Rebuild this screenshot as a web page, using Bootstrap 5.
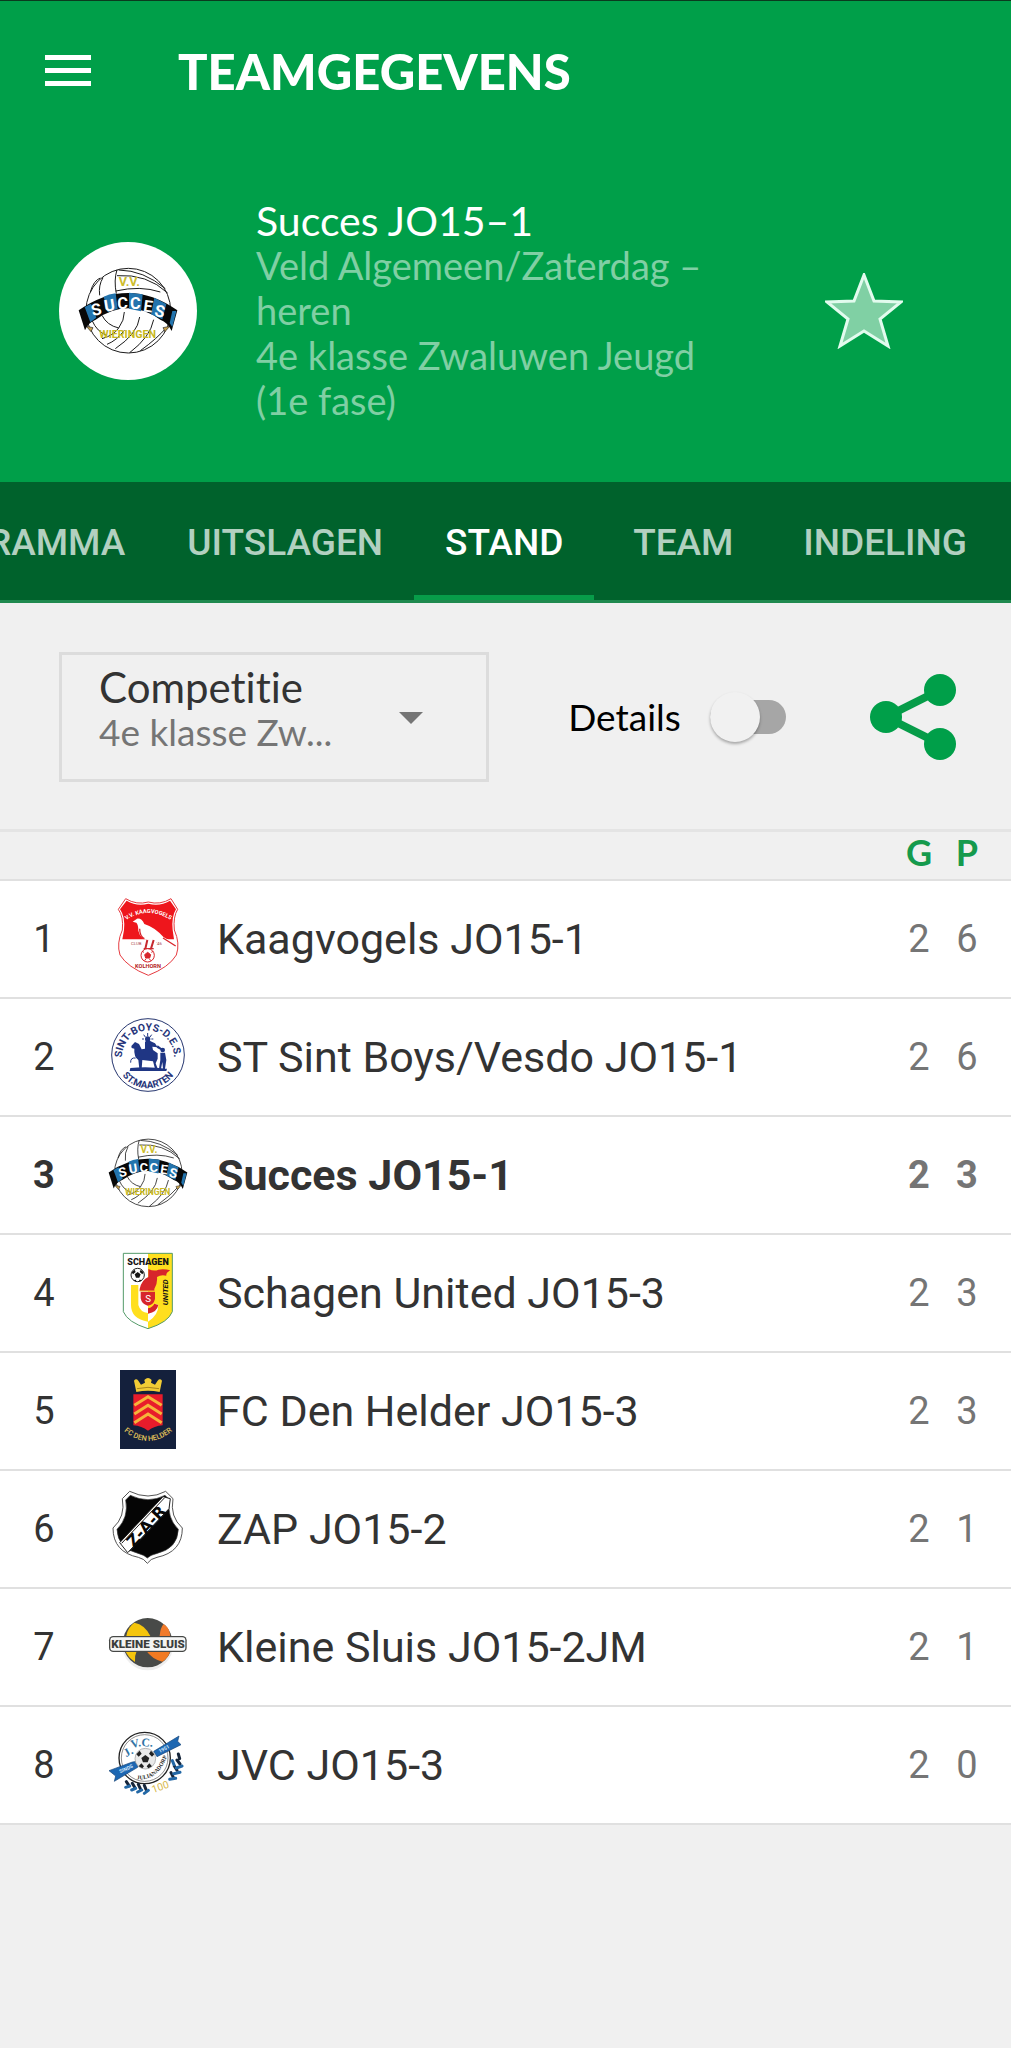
<!DOCTYPE html>
<html lang="nl">
<head>
<meta charset="utf-8">
<meta name="viewport" content="width=device-width, initial-scale=1">
<title>Teamgegevens</title>
<link href="https://cdn.jsdelivr.net/npm/bootstrap@5.3.0/dist/css/bootstrap.min.css" rel="stylesheet">
<style>
  :root { --club: #009f49; --club-dark: #00622c; --line: #e0e0e0; --ink: #333; --soft: #757575; }
  body { background: #f0f0f0; font-family: Roboto, "Liberation Sans", sans-serif; color: var(--ink); overflow-x: hidden; }
  .brandfont { font-family: Lato, "Open Sans", sans-serif; font-variant-ligatures: none; }
  .app-head { background: var(--club); border-top: 1px solid #0a3a1e; color: #fff; }
  .app-bar { height: 139px; padding-left: 45px; gap: 87px; }
  .app-bar svg { width: 46px; height: 32px; display: block; }
  .app-title { font-size: 49px; line-height: 60px; font-weight: 900; }
  .team-info { padding: 58px 108px 59px 59px; }
  .crest { width: 138px; height: 138px; background: #fff; }
  .team-text { font-size: 38px; line-height: 45px; width: 480px; margin-left: 59px; color: #80cfa4; }
  .team-name { font-size: 41px; line-height: 45px; font-weight: 400; color: #fff; }
  .fav svg { width: 78px; height: 76px; display: block; }
  .tabs { background: var(--club-dark); border-bottom: 3px solid #1f8a4f; overflow: hidden; justify-content: flex-end; padding-right: 13px; }
  .tabs .nav-link { flex: none; font-size: 37px; font-weight: 500; line-height: 105px; min-width: 178px; text-align: center; padding: 8px 31px 0; color: #b2d0c0; border-bottom: 5px solid transparent; border-radius: 0; }
  .tabs .nav-link.active { color: #fff; border-bottom-color: #079c49; }
  .filters { padding: 49px 54px 47px 59px; border-bottom: 3px solid #e4e4e4; }
  .picker { width: 430px; height: 130px; border: 3px solid #dcdcdc; padding: 10px 63px 0 37px; }
  .picker label { font-size: 42px; line-height: 45px; }
  .picker select { appearance: none; border: 0; background: transparent; padding: 0; width: 250px; font-size: 37px; line-height: 44px; height: 44px; color: var(--soft); }
  .picker svg { width: 24px; height: 12px; margin-top: 47px; }
  .details { font-size: 37px; line-height: 44px; color: #000; gap: 29px; margin-right: 4px; }
  .toggle { appearance: none; width: 76px; height: 34px; margin: 0; display: flex; align-items: center; background: #a6a6a6; border-radius: 17px; }
  .toggle::before { content: ""; flex: none; width: 50px; height: 50px; border-radius: 50%; background: #f1f1f1; box-shadow: 0 2px 3px rgba(0,0,0,.3); }
  .share svg { width: 88px; height: 88px; display: block; }
  .standings { table-layout: fixed; width: 100%; margin: 0; border-collapse: collapse; }
  .standings th, .standings td { padding: 0; vertical-align: middle; text-align: center; border-bottom: 2px solid var(--line); }
  .standings thead th { height: 48px; line-height: 41px; font-size: 36px; font-weight: 700; color: #159a4d; vertical-align: top; }
  .standings tbody tr { background: #fff; height: 118px; }
  .standings tbody td { font-size: 38px; line-height: 48px; }
  .standings .pts { color: var(--soft); }
  .standings tbody .club { font-size: 43px; text-align: left; padding-left: 9px; white-space: nowrap; }
  .c-rank { width: 88px; } .c-logo { width: 120px; } .c-num { width: 48px; } .c-end { width: 20px; }
  .own td, .own .pts { font-weight: 700; }
  .logo { width: 84px; height: 84px; display: block; margin: 0 auto; }
</style>
</head>
<body>
<svg width="0" height="0" class="position-absolute" aria-hidden="true">
  <defs>
    <g id="succes">
      <g fill="#fff" stroke="#1c1c1c" stroke-width="3">
        <circle cx="234" cy="241" r="127"/>
        <g fill="none">
          <path d="M200 118Q190 150 198 190M158 142Q144 165 148 195M205 119Q280 120 345 175M200 136Q290 130 352 188M120 185Q130 150 150 143M196 182Q270 165 330 185"/>
          <path d="M155 255Q170 285 205 293Q222 270 222 245M205 293Q190 315 155 325M268 260Q262 310 195 355M310 268Q300 320 238 367M350 290Q320 325 270 361M125 270Q140 305 170 315M222 300Q200 330 170 342"/>
        </g>
      </g>
      <path d="M108 288l14 16 6-12zM358 288l-14 16-6-12z" fill="#c9a24c" stroke="#222" stroke-width="2"/>
      <path d="M85 240Q233 136 381 240L364 302Q352 276 330 268Q233 200 136 268Q114 276 104 300Z" fill="#080808"/>
      <path d="M103 230L122 220 138 262 120 276ZM160 199Q175 192 196 189L202 236Q186 240 172 246ZM236 187L277 192 272 243 236 235ZM312 202L348 221 336 267 302 252ZM366 242L378 242 366 290 358 278Z" fill="#2374ad"/>
      <text font-family="Roboto" font-size="49" font-weight="700" fill="#fff" text-anchor="middle"><tspan x="142" y="258" rotate="-14">S</tspan><tspan x="180" y="244" rotate="-9">U</tspan><tspan x="217" y="237">C</tspan><tspan x="255" y="237">C</tspan><tspan x="291" y="243" rotate="8">E</tspan><tspan x="325" y="256" rotate="12">S</tspan></text>
      <text x="237" y="168" font-family="Roboto" font-size="38" font-weight="700" fill="#cdbd2c" text-anchor="middle">V.V.</text>
      <text x="232" y="323" font-family="Roboto" font-size="32" font-weight="700" fill="#c8b820" text-anchor="middle">WIERINGEN</text>
    </g>
  </defs>
</svg>

<header class="app-head brandfont">
  <div class="app-bar d-flex align-items-center">
    <button class="btn p-0 border-0" type="button" aria-label="Menu">
      <svg viewBox="0 0 46 32" fill="#fff"><path d="M0 0h46v5H0zM0 13h46v5H0zM0 26h46v5H0z"/></svg>
    </button>
    <h1 class="app-title m-0">TEAMGEGEVENS</h1>
  </div>
  <section class="team-info d-flex align-items-center">
    <div class="crest rounded-circle flex-shrink-0">
      <svg viewBox="26 35 414 414" width="138" height="138" role="img" aria-label="VV Succes"><use href="#succes"/></svg>
    </div>
    <div class="team-text">
      <h2 class="team-name m-0">Succes JO15–1</h2>
      <div>Veld Algemeen/Zaterdag –<br>heren</div>
      <div>4e klasse Zwaluwen Jeugd<br>(1e fase)</div>
    </div>
    <button class="fav btn p-0 border-0 ms-auto" type="button" aria-label="Favoriet">
      <svg viewBox="2 2 78 76"><path d="M41 4L51 30 78 31 57 48 65 75 41 60 17 75 25 48 4 31 31 30Z" fill="#80d0a4" stroke="#e2fbee" stroke-width="3"/></svg>
    </button>
  </section>
</header>

<nav class="tabs nav flex-nowrap" aria-label="Onderdelen">
  <a class="nav-link" href="#programma">PROGRAMMA</a>
  <a class="nav-link" href="#uitslagen">UITSLAGEN</a>
  <a class="nav-link active" href="#stand" aria-current="page">STAND</a>
  <a class="nav-link" href="#team">TEAM</a>
  <a class="nav-link" href="#indeling">INDELING</a>
</nav>

<main>
  <div class="filters brandfont d-flex align-items-center justify-content-between">
    <div class="picker d-flex align-items-start justify-content-between">
      <div class="d-flex flex-column">
        <label for="competition">Competitie</label>
        <select id="competition"><option>4e klasse Zw...</option></select>
      </div>
      <svg class="flex-shrink-0" viewBox="0 0 24 12"><path d="M0 0h24L12 12z" fill="#757575"/></svg>
    </div>
    <div class="details d-flex align-items-center">
      <label for="details">Details</label>
      <input class="toggle" type="checkbox" role="switch" id="details">
    </div>
    <button class="share btn p-0 border-0" type="button" aria-label="Delen">
      <svg viewBox="0 0 88 88" fill="#009f49"><path d="M17 44L71 17M17 44L71 71" stroke="#079c49" stroke-width="8"/><circle cx="17" cy="44" r="16"/><circle cx="71" cy="17" r="16"/><circle cx="71" cy="71" r="16"/></svg>
    </button>
  </div>

  <table class="standings">
    <colgroup><col class="c-rank"><col class="c-logo"><col><col class="c-num"><col class="c-num"><col class="c-end"></colgroup>
    <thead class="brandfont"><tr><th colspan="3"></th><th scope="col">G</th><th scope="col">P</th><th></th></tr></thead>
    <tbody>
      <tr>
        <td>1</td>
        <td><svg class="logo" viewBox="33 51 252 252" role="img" aria-label="Kaagvogels">
          <path d="M92 56Q125 76 160 66Q195 76 228 56L248 88Q234 110 238 150Q256 190 244 225Q222 262 160 286Q98 262 75 225Q64 190 82 150Q86 110 70 88Z" fill="#fff" stroke="#e63a3f" stroke-width="3"/>
          <path d="M95 62Q125 80 160 71Q195 80 225 62L243 88Q229 110 233 150L237 178H82L87 150Q91 110 75 88Z" fill="#ee161c"/>
          <path id="kArc" d="M90 122Q160 76 230 122" fill="none"/>
          <text font-family="Roboto" font-size="17" font-weight="700" fill="#fff"><textPath href="#kArc" startOffset="50%" text-anchor="middle">V.V. KAAGVOGELS</textPath></text>
          <path d="M113 125L126 116Q140 114 148 132Q180 142 206 172L240 190 236 196 200 182 166 180Q136 180 130 152Q130 134 124 128Z" fill="#fff"/>
          <path d="M204 174L242 198M134 146q0 22 14 30" stroke="#d8252b" stroke-width="4" fill="none"/>
          <path d="M157 180l-6 26M176 180l-8 26" stroke="#c7282e" stroke-width="6"/><path d="M146 206h30" stroke="#c7282e" stroke-width="4"/>
          <text x="108" y="194" font-family="Roboto" font-size="13" fill="#a44">CLUB</text><text x="184" y="194" font-family="Roboto" font-size="13" fill="#a44">'46</text>
          <circle cx="158" cy="226" r="20" fill="#fff" stroke="#d8252b" stroke-width="3"/>
          <path d="M158 217l9 7-3 10h-12l-3-10zM141 214l6 3M175 214l-6 3M149 242l4-6M167 242l-4-6" fill="#d8252b" stroke="#d8252b" stroke-width="3"/>
          <text x="159" y="263" font-family="Roboto" font-size="17" font-weight="700" fill="#b31c25" text-anchor="middle">KOLHORN</text>
        </svg></td>
        <td class="club">Kaagvogels JO15-1</td><td class="pts">2</td><td class="pts">6</td><td></td>
      </tr>
      <tr>
        <td>2</td>
        <td><svg class="logo" viewBox="33 405 252 252" role="img" aria-label="Sint Boys D.E.S.">
          <circle cx="159" cy="525" r="109" fill="#fff" stroke="#26366f" stroke-width="3"/>
          <path id="sTop" d="M81 530A78 78 0 0 1 237 530" fill="none"/><path id="sBot" d="M66 555A97 97 0 0 0 252 555" fill="none"/>
          <g font-family="Roboto" font-weight="700" fill="#26357a"><text font-size="31"><textPath href="#sTop" startOffset="50%" text-anchor="middle">SINT-BOYS-D.E.S.</textPath></text>
          <text font-size="29"><textPath href="#sBot" startOffset="50%" text-anchor="middle">ST.MAARTEN</textPath></text></g>
          <g fill="#1f3684"><path d="M109 498L120 486 132 492 140 508 150 506 150 486 158 478 167 484 180 490 188 502 172 500 174 510 188 520 188 536 182 550 188 566 180 566 174 544 142 540 140 566 133 566 130 540Q116 530 118 506L110 504Z"/><circle cx="158" cy="477" r="8"/><circle cx="203" cy="510" r="7"/><path d="M196 518h14l4 22-4 26h-6l-2-20-4 20h-6l4-26zM106 564q50-6 110 2l-2 7H104zM188 496l14 10-3 5-14-8z"/></g>
          <path d="M122 534q-16-2-15 14M158 459v9M146 464l5 7M170 464l-5 7M141 477h6M175 477h-6" stroke="#1f3684" stroke-width="3" fill="none"/>
        </svg></td>
        <td class="club">ST Sint Boys/Vesdo JO15-1</td><td class="pts">2</td><td class="pts">6</td><td></td>
      </tr>
      <tr class="own">
        <td>3</td>
        <td><svg class="logo" viewBox="75 91 316 316" role="img" aria-label="VV Succes"><use href="#succes"/></svg></td>
        <td class="club">Succes JO15-1</td><td class="pts">2</td><td class="pts">3</td><td></td>
      </tr>
      <tr>
        <td>4</td>
        <td><svg class="logo" viewBox="33 408 252 252" role="img" aria-label="Schagen United">
          <path d="M85 415H232V590Q220 622 159 641Q98 622 85 590Z" fill="#fff"/>
          <path d="M159 450V415H232V590Q220 622 159 641Z" fill="#ffdf1e"/>
          <path d="M85 415H232V590Q220 622 159 641Q98 622 85 590Z" fill="none" stroke="#549b69" stroke-width="3"/>
          <path d="M108 510H130V570Q136 592 159 594V620Q108 612 108 570Z" fill="#ffdf1e"/>
          <path d="M159 594Q176 590 180 566L190 570Q190 602 159 620Z" fill="#fff"/>
          <path d="M160 462Q178 470 190 464Q206 460 226 466Q212 474 214 482Q198 478 186 486Q188 506 178 522V528H134V522Q140 494 160 486ZM137 530H180V552Q176 570 158 572Q140 568 137 550ZM159 580Q174 576 178 566L190 570Q186 592 159 596Z" fill="#d7262b"/>
          <path d="M134 528h46" stroke="#f4bd26" stroke-width="3"/>
          <circle cx="128" cy="480" r="20" fill="#fff" stroke="#222" stroke-width="3"/><path d="M128 471l9 7-4 10h-10l-4-10zM110 472l9-8 3 7-8 7zM146 472l-9-8-3 7 8 7zM115 495l9-1-2 6zM141 495l-9-1 2 6z" fill="#151515"/>
          <text x="159" y="449" font-family="Roboto" font-size="27" font-weight="900" fill="#151515" text-anchor="middle">SCHAGEN</text>
          <text x="159" y="562" font-family="Roboto" font-size="29" fill="#fff" text-anchor="middle">S</text>
          <text transform="translate(218 532) rotate(-90)" font-family="Roboto" font-size="23" font-weight="700" font-style="italic" fill="#151515" text-anchor="middle">UNITED</text>
        </svg></td>
        <td class="club">Schagen United JO15-3</td><td class="pts">2</td><td class="pts">3</td><td></td>
      </tr>
      <tr>
        <td>5</td>
        <td><svg class="logo" viewBox="33 57 252 252" role="img" aria-label="FC Den Helder">
          <path d="M75 60H243V297H75z" fill="#14203c"/>
          <path d="M124 126L117 92Q123 84 130 92L138 104 150 98 148 90Q159 78 170 90L168 98 180 104 188 92Q195 84 201 92L194 126Q159 118 124 126Z" fill="#f2cc35"/><path d="M126 116Q159 108 192 116" stroke="#a9851e" stroke-width="3" fill="none"/>
          <path d="M115 133H203V226Q178 228 159 242Q140 228 115 226Z" fill="#e81c2b"/>
          <path d="M118 166L159 140 200 166M118 192L159 166 200 192M118 218L159 192 200 218" fill="none" stroke="#f6b43a" stroke-width="9"/>
          <path id="hArc" d="M82 238Q159 308 238 238" fill="none"/>
          <text font-family="Roboto" font-size="22" font-weight="500" fill="#e5c65a"><textPath href="#hArc" startOffset="50%" text-anchor="middle">FC DEN HELDER</textPath></text>
        </svg></td>
        <td class="club">FC Den Helder JO15-3</td><td class="pts">2</td><td class="pts">3</td><td></td>
      </tr>
      <tr>
        <td>6</td>
        <td><svg class="logo" viewBox="33 411 252 252" role="img" aria-label="ZAP">
          <path d="M104 424Q160 452 212 424L234 446Q224 500 262 534Q262 606 186 622Q166 626 157 640Q148 626 130 622Q54 606 54 534Q92 500 82 446Z" fill="#fff" stroke="#555" stroke-width="3"/>
          <path d="M106 436Q160 462 210 436L224 450Q214 502 250 538Q248 596 184 611Q166 615 157 624Q148 615 132 611Q68 596 66 538Q102 502 92 450Z" fill="#050505" stroke="#333" stroke-width="2"/>
          <path d="M74 578L204 440 226 446 222 476 98 608Z" fill="#fff" stroke="#222" stroke-width="3"/>
          <path d="M80 580L208 444M104 604L220 480" stroke="#222" stroke-width="3"/>
          <text transform="translate(166 540) rotate(-47)" font-family="DejaVu Sans" font-size="48" font-weight="700" fill="#080808" text-anchor="middle">Z-A-R</text>
        </svg></td>
        <td class="club">ZAP JO15-2</td><td class="pts">2</td><td class="pts">1</td><td></td>
      </tr>
      <tr>
        <td>7</td>
        <td><svg class="logo" viewBox="33 45 252 252" role="img" aria-label="Kleine Sluis">
          <circle cx="158" cy="164" r="77" fill="#eee"/><circle cx="158" cy="158" r="74" fill="#484a48"/>
          <path d="M94 138Q98 112 118 98Q150 104 166 138Z" fill="#f5c50c"/><path d="M194 138Q196 112 206 102Q226 116 226 142Z" fill="#f17a2a"/>
          <path d="M90 180H126Q118 198 120 216Q98 202 90 180Z" fill="#f5c50c"/><path d="M154 182H226Q220 204 202 215Q170 206 154 182Z" fill="#f17a22"/>
          <rect x="42" y="138" width="233" height="48" rx="13" fill="#464846"/><rect x="46" y="142" width="225" height="40" rx="9" fill="#fff"/><rect x="49" y="145" width="219" height="34" rx="6" fill="#f4f4f2"/>
          <text x="159" y="175" font-family="Roboto" font-size="35" font-weight="900" fill="#3c3e3c" text-anchor="middle">KLEINE SLUIS</text>
        </svg></td>
        <td class="club">Kleine Sluis JO15-2JM</td><td class="pts">2</td><td class="pts">1</td><td></td>
      </tr>
      <tr>
        <td>8</td>
        <td><svg class="logo" viewBox="33 399 252 252" role="img" aria-label="JVC">
          <circle cx="149" cy="504" r="77" fill="#fff" stroke="#222" stroke-width="4"/><circle cx="149" cy="504" r="70" fill="none" stroke="#555" stroke-width="2"/>
          <path id="jBot" d="M112 566Q192 582 220 486" fill="none"/>
          <g font-family="Liberation Serif" font-size="35" font-weight="700" fill="#3174a5"><text transform="translate(94 502) rotate(-30)">J.</text><text transform="translate(110 475) rotate(-14)">V.</text><text transform="translate(139 468) rotate(4)">C.</text></g>
          <text font-family="Liberation Serif" font-size="17" font-weight="700" fill="#222"><textPath href="#jBot" startOffset="50%" text-anchor="middle">JULIANADORP</textPath></text>
          <path d="M42 542L112 516 128 514 128 532 58 574 62 558ZM176 484L252 438 248 454 258 464 186 500Z" fill="#1d67b2" stroke="#164578" stroke-width="2"/>
          <circle cx="151" cy="506" r="31" fill="#e9e9e9" stroke="#999" stroke-width="2"/>
          <path d="M151 495l12 9-5 13h-14l-5-13zM124 493l10-11 6 9-9 9zM178 493l-10-11-6 9 9 9zM131 529l8-9 8 9-5 6zM171 529l-8-9-8 9 5 6z" fill="#222"/>
          <g font-family="Roboto" font-size="15" font-weight="700" fill="#d9ecff"><text transform="translate(76 550) rotate(-25)">SINDS</text><text transform="translate(194 489) rotate(-27)">1951</text></g>
          <g fill="none" stroke-linecap="round" stroke-width="9"><path stroke="#15253a" d="M94 575l8 12M112 580l7 12M130 583l6 13M148 586l5 12M228 548l7 14M238 528l8 13M246 510l9 12M250 492l4 14"/><path stroke="#2368a6" d="M92 592l12-4M110 600l12-5M128 606l12-6M148 610l12-9M224 568l18-3M236 551l19-4M244 534l17-6M232 512l5 12"/></g>
          <text transform="translate(175 610) rotate(-20)" font-family="Roboto" font-size="31" fill="#d6b84c">100</text>
        </svg></td>
        <td class="club">JVC JO15-3</td><td class="pts">2</td><td class="pts">0</td><td></td>
      </tr>
    </tbody>
  </table>
</main>
<script src="https://cdn.jsdelivr.net/npm/bootstrap@5.3.0/dist/js/bootstrap.bundle.min.js"></script>
</body>
</html>
